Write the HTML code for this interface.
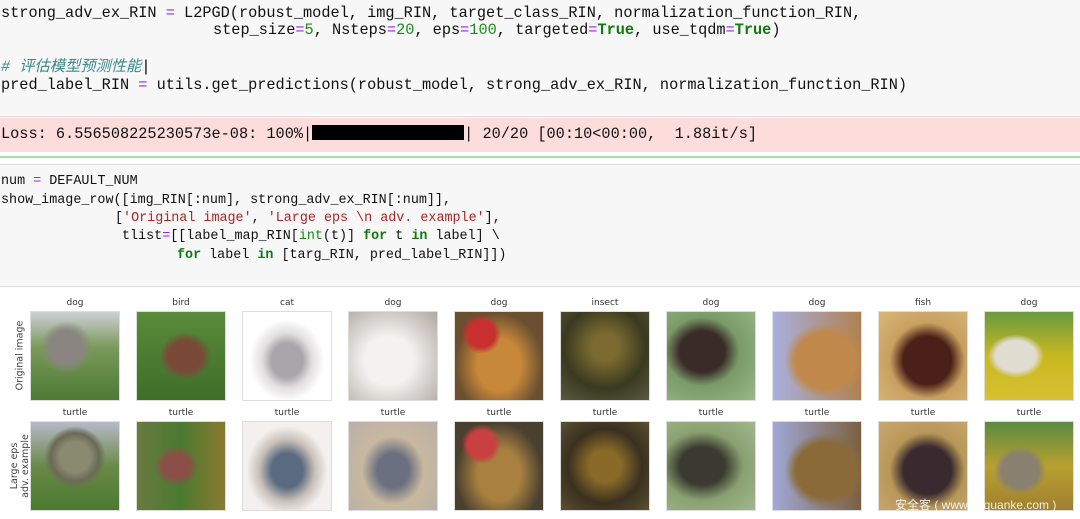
<!DOCTYPE html>
<html><head><meta charset="utf-8"><style>
body{margin:0;width:1080px;height:519px;overflow:hidden;background:#fff;position:relative;font-family:"Liberation Mono",monospace}
.code{position:absolute;left:0;width:1080px;background:#f7f7f7;font-size:15.25px;line-height:18px;color:#111;white-space:pre}
.c2{font-size:13.4px}
.l{position:absolute;left:1px}
.o{color:#a020f0}.n{color:#1a8a1a}.k{color:#107a10;font-weight:bold}.s{color:#b22222}.c{color:#3a8a8a;font-style:italic}
.lab{position:absolute;font-family:"DejaVu Sans","Liberation Sans",sans-serif;font-size:9px;color:#333;width:88px;text-align:center}
.im{position:absolute;width:88px;height:88px;outline:1px solid #ddd}
.yl{position:absolute;font-family:"DejaVu Sans",sans-serif;font-size:9.5px;color:#444;transform:rotate(-90deg);transform-origin:center;text-align:center;white-space:nowrap;line-height:11px}
</style></head><body>
<div class="code" style="top:0;height:115px;">
<div class="l" style="top:4px">strong_adv_ex_RIN <span class="o">=</span> L2PGD(robust_model, img_RIN, target_class_RIN, normalization_function_RIN,</div>
<div class="l" style="top:21px;left:213px">step_size<span class="o">=</span><span class="n">5</span>, Nsteps<span class="o">=</span><span class="n">20</span>, eps<span class="o">=</span><span class="n">100</span>, targeted<span class="o">=</span><span class="k">True</span>, use_tqdm<span class="o">=</span><span class="k">True</span>)</div>
<div class="l c" style="top:58px;font-family:'Liberation Mono','Noto Sans CJK SC',monospace"># 评估模型预测性能<span style="font-style:normal;color:#000">|</span></div>
<div class="l" style="top:76px">pred_label_RIN <span class="o">=</span> utils.get_predictions(robust_model, strong_adv_ex_RIN, normalization_function_RIN)</div>
</div>
<div style="position:absolute;top:116px;left:0;width:1080px;height:1px;background:#e4d4d4"></div>
<div class="code" style="top:118px;height:34px;background:#fddcdc">
<div class="l" style="top:7px">Loss: 6.556508225230573e-08: 100%|<span style="display:inline-block;width:152px;height:15px;background:#000;vertical-align:-2px"></span>| 20/20 [00:10&lt;00:00,  1.88it/s]</div>
</div>
<div style="position:absolute;top:156px;left:0;width:1080px;height:2px;background:#a8dca8"></div>
<div style="position:absolute;top:164px;left:0;width:1080px;height:1px;background:#ddd"></div>
<div class="code c2" style="top:165px;height:121px;">
<div class="l" style="top:8px">num <span class="o">=</span> DEFAULT_NUM</div>
<div class="l" style="top:27px">show_image_row([img_RIN[:num], strong_adv_ex_RIN[:num]],</div>
<div class="l" style="top:45px;left:115px">[<span class="s">'Original image'</span>, <span class="s">'Large eps \n adv. example'</span>],</div>
<div class="l" style="top:63px;left:122px">tlist<span class="o">=</span>[[label_map_RIN[<span class="n">int</span>(t)] <span class="k">for</span> t <span class="k">in</span> label] \</div>
<div class="l" style="top:82px;left:177px"><span class="k">for</span> label <span class="k">in</span> [targ_RIN, pred_label_RIN]])</div>
</div>
<div style="position:absolute;top:286px;left:0;width:1080px;height:1px;background:#ddd"></div>

<div class="yl" style="left:-20px;top:350px;width:80px">Original image</div>
<div class="yl" style="left:-20px;top:455px;width:80px">Large eps<br>adv. example</div>

<div class="lab" style="left:31px;top:298px">dog</div><div class="lab" style="left:137px;top:298px">bird</div><div class="lab" style="left:243px;top:298px">cat</div><div class="lab" style="left:349px;top:298px">dog</div><div class="lab" style="left:455px;top:298px">dog</div><div class="lab" style="left:561px;top:298px">insect</div><div class="lab" style="left:667px;top:298px">dog</div><div class="lab" style="left:773px;top:298px">dog</div><div class="lab" style="left:879px;top:298px">fish</div><div class="lab" style="left:985px;top:298px">dog</div>

<div class="im" style="left:31px;top:312px;background:radial-gradient(circle at 40% 40%,#8a8580 0 22%,transparent 35%),linear-gradient(#cfcfd8,#7a9a5a 40%,#4d7a35)"></div>
<div class="im" style="left:137px;top:312px;background:radial-gradient(ellipse at 55% 50%,#7a4a38 0 25%,transparent 38%),linear-gradient(#5a8a3a,#3f6e2a)"></div>
<div class="im" style="left:243px;top:312px;background:radial-gradient(ellipse at 50% 55%,#a8a6a8 0 25%,#e0dede 40%,#fff 60%)"></div>
<div class="im" style="left:349px;top:312px;background:radial-gradient(ellipse at 45% 55%,#f4f2f0 0 35%,#d8d4d0 60%,#b0a8a0)"></div>
<div class="im" style="left:455px;top:312px;background:radial-gradient(circle at 30% 25%,#c83030 0 15%,transparent 22%),radial-gradient(ellipse at 50% 60%,#c8883a 0 35%,#6a5030 70%)"></div>
<div class="im" style="left:561px;top:312px;background:radial-gradient(circle at 50% 40%,#7a6a30 0 20%,#3a3a20 60%,#5a5a40)"></div>
<div class="im" style="left:667px;top:312px;background:radial-gradient(ellipse at 40% 45%,#3a2a28 0 30%,#7a9a68 50%,#9ab888)"></div>
<div class="im" style="left:773px;top:312px;background:radial-gradient(ellipse at 60% 55%,#c0884a 0 40%,transparent 55%),linear-gradient(90deg,#a8b0e0,#b08050)"></div>
<div class="im" style="left:879px;top:312px;background:radial-gradient(ellipse at 55% 55%,#4a2018 0 35%,#c8a060 55%,#d8b878)"></div>
<div class="im" style="left:985px;top:312px;background:radial-gradient(ellipse at 35% 50%,#e0dcd0 0 25%,transparent 35%),linear-gradient(#6a9a40,#c8b820 50%,#d8c030)"></div>

<div class="lab" style="left:31px;top:408px">turtle</div><div class="lab" style="left:137px;top:408px">turtle</div><div class="lab" style="left:243px;top:408px">turtle</div><div class="lab" style="left:349px;top:408px">turtle</div><div class="lab" style="left:455px;top:408px">turtle</div><div class="lab" style="left:561px;top:408px">turtle</div><div class="lab" style="left:667px;top:408px">turtle</div><div class="lab" style="left:773px;top:408px">turtle</div><div class="lab" style="left:879px;top:408px">turtle</div><div class="lab" style="left:985px;top:408px">turtle</div>

<div class="im" style="left:31px;top:422px;background:radial-gradient(circle at 50% 40%,#8a8a70 0 22%,#6a6a58 35%,transparent 45%),linear-gradient(#b8b8c8,#6a8a48 50%,#4a7a30)"></div>
<div class="im" style="left:137px;top:422px;background:radial-gradient(ellipse at 45% 50%,#8a5048 0 20%,transparent 32%),linear-gradient(90deg,#6a7a40,#4a7a30 50%,#8a7a30)"></div>
<div class="im" style="left:243px;top:422px;background:radial-gradient(ellipse at 50% 55%,#5a6a80 0 25%,#c8c0b8 45%,#f4f0f0 65%)"></div>
<div class="im" style="left:349px;top:422px;background:radial-gradient(ellipse at 50% 55%,#6a7080 0 25%,#c8b8a0 50%,#b8b0a8)"></div>
<div class="im" style="left:455px;top:422px;background:radial-gradient(circle at 30% 25%,#c84040 0 15%,transparent 22%),radial-gradient(ellipse at 50% 60%,#a88040 0 35%,#4a4030 70%)"></div>
<div class="im" style="left:561px;top:422px;background:radial-gradient(circle at 50% 50%,#8a6a28 0 25%,#3a3020 60%,#5a5030)"></div>
<div class="im" style="left:667px;top:422px;background:radial-gradient(ellipse at 40% 50%,#3a3a30 0 30%,#8aa070 55%,#a0b890)"></div>
<div class="im" style="left:773px;top:422px;background:radial-gradient(ellipse at 60% 55%,#8a6a38 0 40%,transparent 55%),linear-gradient(90deg,#a0a8d8,#7a6040)"></div>
<div class="im" style="left:879px;top:422px;background:radial-gradient(ellipse at 55% 55%,#3a2a30 0 35%,#b89858 55%,#c8a870)"></div>
<div class="im" style="left:985px;top:422px;background:radial-gradient(ellipse at 40% 55%,#8a8070 0 25%,transparent 35%),linear-gradient(#5a8a40,#b8a030 50%,#a08030)"></div>

<div style="position:absolute;left:895px;top:496px;font-family:'Liberation Sans','Noto Sans CJK SC',sans-serif;font-size:12px;color:rgba(255,255,255,0.85);white-space:nowrap">安全客 ( www.anquanke.com )</div>
</body></html>
